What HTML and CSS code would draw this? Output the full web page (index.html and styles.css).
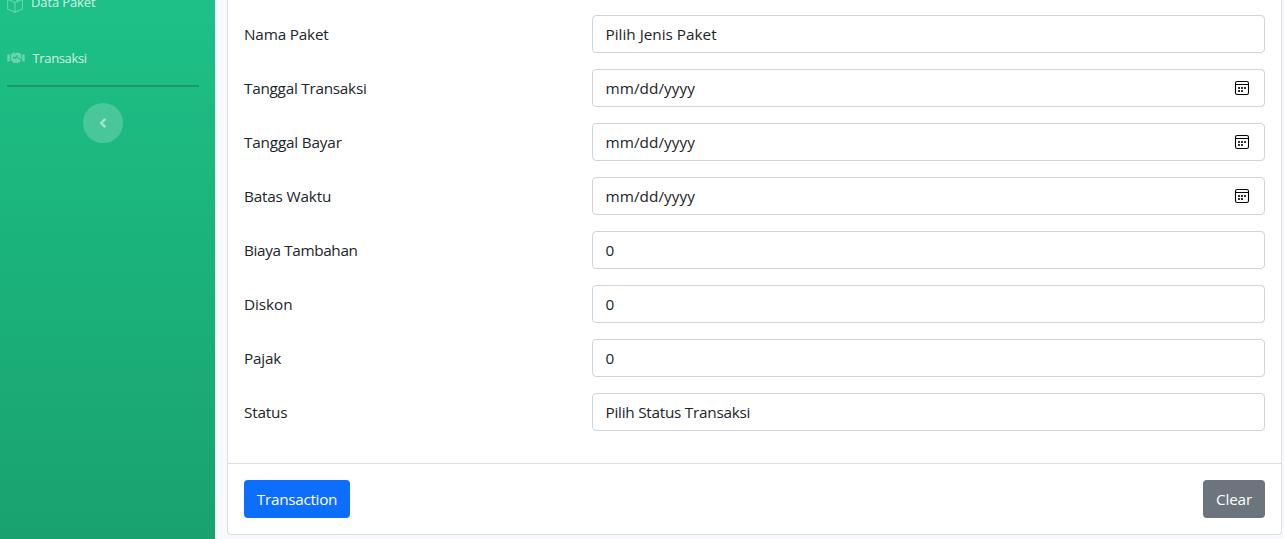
FILE: index.html
```html
<!DOCTYPE html>
<html lang="id">
<head>
<meta charset="utf-8">
<title>Transaksi</title>
<link rel="stylesheet" href="styles.css">
</head>
<body>
<div class="wrapper">
  <nav class="sidebar">
    <a class="nav-link nav-paket">
      <svg class="icon-box" width="16" height="18" viewBox="0 0 16 18"><path d="M8 1 15.4 4.2V14L8 17.3.6 14V4.200L8 1M.6 4.200 8 7.600 15.400 4.200M8 7.600v9.700M4.300 2.600l7.400 3.300"/></svg>
      <span>Data Paket</span>
    </a>
    <a class="nav-link nav-transaksi">
      <svg class="icon-hands" width="18" height="14" viewBox="0 0 640 512"><path d="M434.700 64h-85.900c-8 0-15.700 3-21.600 8.400l-98.300 90c-.1.1-.2.300-.3.400-16.600 15.600-16.300 40.500-2.100 56 12.700 13.900 39.400 17.600 56.100 2.700.1-.1.3-.1.4-.2l79.900-73.200c6.500-5.900 16.700-5.500 22.600 1 6 6.500 5.500 16.600-1 22.600l-26.100 23.900L504 313.800c2.900 2.400 5.500 5 7.900 7.700V128l-54.600-54.600c-5.900-6-14.100-9.400-22.600-9.400zM544 128.200v223.900c0 17.700 14.300 32 32 32h64V128.200h-96zM0 384h64c17.700 0 32-14.300 32-32V128.200H0V384zm483.900-45.300L358.300 236.800l-33.500 30.700c-27.500 25.100-71 24.900-99.400-2.700-28.500-31-25.400-77.800 3.100-104L305.800 64.100h-74.500c-8.500 0-16.600 3.400-22.600 9.400L128 128v223.900h18.300l90.500 81.900c27.400 22.300 67.700 18.100 90-9.300l.2-.2 17.900 15.500c15.900 13 39.400 10.500 52.300-5.400l31.400-38.600 5.400 4.400c13.700 11.100 33.900 9.100 45-4.700l9.500-11.700c11.200-13.800 9.100-33.900-4.600-45.100z"/></svg>
      <span>Transaksi</span>
    </a>
    <hr class="divider">
    <button class="toggle" aria-label="Toggle sidebar">
      <svg width="8" height="12" viewBox="0 0 8 12"><path d="M6.300 1.900 2.300 6l4 4.100"/></svg>
    </button>
  </nav>
  <main class="content">
    <div class="card">
      <form class="card-body">
        <div class="row"><label>Nama Paket</label><div class="control"><span>Pilih Jenis Paket</span></div></div>
        <div class="row"><label class="tight">Tanggal Transaksi</label><div class="control"><span class="date">mm/dd/yyyy</span><svg class="cal" width="16" height="16"><use href="#cal"/></svg></div></div>
        <div class="row"><label>Tanggal Bayar</label><div class="control"><span class="date">mm/dd/yyyy</span><svg class="cal" width="16" height="16"><use href="#cal"/></svg></div></div>
        <div class="row"><label>Batas Waktu</label><div class="control"><span class="date">mm/dd/yyyy</span><svg class="cal" width="16" height="16"><use href="#cal"/></svg></div></div>
        <div class="row"><label class="tighter">Biaya Tambahan</label><div class="control"><span>0</span></div></div>
        <div class="row"><label class="loose">Diskon</label><div class="control"><span>0</span></div></div>
        <div class="row"><label>Pajak</label><div class="control"><span>0</span></div></div>
        <div class="row"><label>Status</label><div class="control"><span class="tight">Pilih Status Transaksi</span></div></div>
      </form>
      <div class="card-footer">
        <button class="btn primary">Transaction</button>
        <button class="btn secondary">Clear</button>
      </div>
    </div>
  </main>
</div>
<svg width="0" height="0" class="defs">
  <symbol id="cal" viewBox="0 0 16 16">
    <rect x="1.500" y="1.500" width="13" height="13" rx="1.800" fill="none" stroke="#000" stroke-width="1.100"/>
    <path d="M1.500 4.500h13" stroke="#000" stroke-width="1"/>
    <path d="M7 7h2v2H7zM10 7h2v2h-2zM4 7h2v2H4zM4 10h2v2H4zM7 10h2v2H7z" fill="#333"/>
  </symbol>
</svg>
</body>
</html>
```
FILE: styles.css
```css
* { box-sizing: border-box; }
body {
  margin: 0;
  height: 539px;
  overflow: hidden;
  background: #f8f9fc;
  color: #212529;
  font: 15.3px/24px "Segoe UI", "Open Sans", "Noto Sans", sans-serif;
}
.wrapper { display: flex; height: 539px; }
.sidebar {
  flex: 0 0 215px;
  display: flex;
  flex-direction: column;
  background: linear-gradient(180deg, #1dc187, #19a26f);
}
.nav-link {
  display: flex;
  align-items: center;
  flex: none;
  padding-left: 7px;
  color: rgba(255, 255, 255, .8);
  font-size: 13px;
  line-height: 20px;
}
.nav-paket { gap: 8px; height: 20px; margin-top: -8px; letter-spacing: -.12px; }
.nav-transaksi { gap: 7.5px; height: 20px; margin-top: 36px; letter-spacing: -.35px; }
.icon-box { fill: none; stroke: rgba(255, 255, 255, .32); stroke-width: 1.1; margin-top: 3px; }
.icon-hands { fill: rgba(255, 255, 255, .34); }
.divider {
  flex: none;
  width: 192px;
  height: 2px;
  margin: 17px 0 0 7px;
  border: 0;
  background: rgba(33, 37, 41, .25);
}
.toggle {
  display: flex;
  align-items: center;
  justify-content: center;
  flex: none;
  width: 40px;
  height: 40px;
  margin: 16px 0 0 83px;
  padding: 0;
  border: 0;
  border-radius: 50%;
  background: rgba(255, 255, 255, .2);
}
.toggle path { fill: none; stroke: rgba(255, 255, 255, .5); stroke-width: 2.5; }
.content { flex: 1; padding: 0 2px 4px 12px; }
.card {
  height: 535px;
  display: flex;
  flex-direction: column;
  border: 1px solid #dfdfe2;
  border-top: 0;
  border-radius: 0 0 4px 4px;
  background: #fff;
}
.card-body {
  display: flex;
  flex-direction: column;
  gap: 16px;
  padding: 15px 16px 32px;
}
.row { display: grid; grid-template-columns: 348px 1fr; align-items: center; }
label { letter-spacing: -.18px; }
.tight { letter-spacing: -.25px; }
.tighter { letter-spacing: -.36px; }
.loose { letter-spacing: -.05px; }
.control {
  display: flex;
  align-items: center;
  justify-content: space-between;
  height: 38px;
  padding: 0 14px 0 12.5px;
  border: 1px solid #ced4da;
  border-radius: 4px;
}
.date { letter-spacing: .06px; }
.card-footer {
  display: flex;
  justify-content: space-between;
  padding: 16px;
  border-top: 1px solid #dfdfdf;
}
.btn {
  height: 38px;
  border: 0;
  border-radius: 4px;
  color: #fff;
  font: inherit;
  letter-spacing: -.3px;
  padding: 0;
}
.primary { width: 106px; background: #0d6efd; }
.secondary { width: 62px; background: #6c757d; letter-spacing: -.15px; }
.defs { position: absolute; }
```
